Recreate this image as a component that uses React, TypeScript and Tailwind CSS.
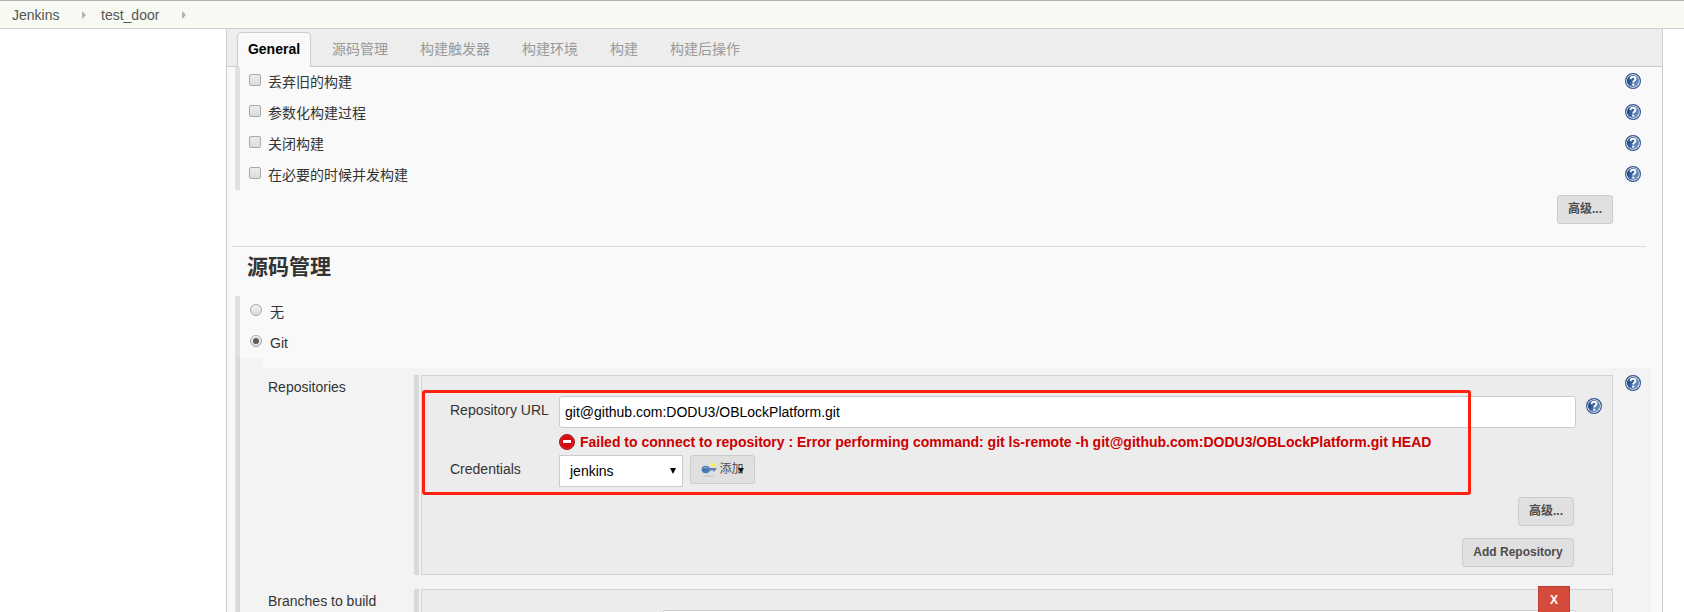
import type { ReactNode } from "react";

const tabs = ["源码管理", "构建触发器", "构建环境", "构建", "构建后操作"];
const options = ["丢弃旧的构建", "参数化构建过程", "关闭构建", "在必要的时候并发构建"];

function HelpIcon() {
  return (
    <svg width="16" height="16" viewBox="0 0 16 16" className="block shrink-0">
      <defs>
        <linearGradient id="help" x1="0" y1="0.2" x2="1" y2="0.8">
          <stop offset="0.2" stopColor="#1f4a8a" />
          <stop offset="1" stopColor="#7d9fcb" />
        </linearGradient>
      </defs>
      <circle cx="8" cy="8" r="7.4" fill="#fff" stroke="#2f5590" strokeWidth="1.2" />
      <circle cx="8" cy="8" r="6.1" fill="url(#help)" />
      <path d="M5.6 6.2C5.6 4.5 6.6 3.8 8 3.8s2.5.8 2.5 2.1c0 1.6-2.2 1.6-2.2 3.5" fill="none" stroke="#fff" strokeWidth="2" />
      <rect x="7.2" y="10.6" width="2.1" height="2" fill="#fff" />
    </svg>
  );
}

function ErrorIcon() {
  return (
    <svg width="16" height="16" viewBox="0 0 16 16" className="block shrink-0">
      <circle cx="8" cy="8" r="7.5" fill="#d40c10" stroke="#a50f12" />
      <circle cx="8" cy="8" r="6.5" fill="none" stroke="#e03a3a" strokeWidth="0.6" />
      <rect x="4" y="6" width="8" height="3" fill="#fff" />
    </svg>
  );
}

function KeyIcon() {
  return (
    <svg width="16" height="16" viewBox="0 0 16 16" className="mt-0.5 block shrink-0">
      <ellipse cx="8" cy="14.2" rx="5.5" ry="0.9" fill="#cdcdcd" />
      <circle cx="12.5" cy="3" r="2.3" fill="#f0eb7a" />
      <circle cx="12.5" cy="3" r="1.4" fill="#fff62a" />
      <path d="M6 5.9h9.2v2.2h-1.4v1.5h-1.4V8.5H6z" fill="#5a86ba" />
      <ellipse cx="4.8" cy="7.5" rx="4.2" ry="3.7" fill="#4a7ab5" />
      <path d="M1.8 6.4Q4.8 3.8 7.6 6.2" fill="none" stroke="#8fb0d8" strokeWidth="1" />
      <circle cx="2.8" cy="7.6" r="0.8" fill="#3a4f6e" />
    </svg>
  );
}

function Crumb({ children, className }: { children: ReactNode; className: string }) {
  return (
    <div className={"flex items-center " + className}>
      <span>{children}</span>
      <svg width="4" height="8" viewBox="0 0 4 8" className="mt-px ml-[23px]">
        <path d="M0 0L4 4L0 8z" fill="#b0b0b0" />
      </svg>
    </div>
  );
}

function Button({ children, className }: { children: ReactNode; className: string }) {
  return (
    <button
      className={
        "flex h-[29px] items-center justify-center rounded-[3px] border border-[#ccc] bg-[#e0e0e0] pb-0.5 text-xs leading-none text-[#4d4d4d] " +
        className
      }
    >
      {children}
    </button>
  );
}

function Radio({ label, checked }: { label: string; checked?: boolean }) {
  return (
    <div className="flex h-[31px] items-start pl-[10px]">
      <span className="mt-2 flex size-3 items-center justify-center rounded-full border border-[#a8a8a8] bg-linear-to-b from-[#f0f0f0] to-[#dcdcdc]">
        {checked && <span className="size-1.5 rounded-full bg-[#5c5c5c]" />}
      </span>
      <span className="ml-2 pt-1.5 leading-5">{label}</span>
    </div>
  );
}

export default function App() {
  return (
    <div className="relative flex h-[612px] w-[1684px] flex-col overflow-hidden bg-white font-['Liberation_Sans','Noto_Sans_CJK_SC',sans-serif] text-sm text-[#333]">
      <header className="flex h-[29px] shrink-0 items-center border-t border-b border-t-[#b5b0b3] border-b-[#d3d3cd] bg-[#f6faf2] text-[#555]">
        <Crumb className="w-[101px] pl-3">Jenkins</Crumb>
        <Crumb className="">test_door</Crumb>
      </header>

      <main className="ml-[226px] flex h-[583px] w-[1437px] flex-col border-x border-[#ccc] bg-[#f9f9f9]">
        <nav className="flex h-[38px] shrink-0 items-end border-b border-[#ccc] bg-[#ededed] pl-[10px] text-[#999]">
          <div className="-mb-px flex h-[35px] w-[74px] items-center justify-center rounded-t-[5px] border border-b-0 border-[#ccc] bg-[#f9f9f9] pb-0.5 font-bold text-black">
            General
          </div>
          <div className="flex h-[35px] items-center gap-8 pl-[21px]">
            {tabs.map((t) => (
              <span key={t}>{t}</span>
            ))}
          </div>
        </nav>

        <section className="ml-2 flex h-[123px] w-[1406px] shrink-0 flex-col border-l-[5px] border-[#e0e0e0]">
          {options.map((o) => (
            <div key={o} className="flex h-[31px] shrink-0 items-start pl-[9px]">
              <span className="mt-[7px] size-3 rounded-[2px] border border-[#a8a8a8] bg-linear-to-b from-[#ececec] to-[#dcdcdc]" />
              <span className="ml-[7px] flex-1 pt-[5px] leading-5">{o}</span>
              <span className="pt-1.5">
                <HelpIcon />
              </span>
            </div>
          ))}
        </section>

        <div className="flex shrink-0 justify-end pt-[5px] pr-[49px]">
          <Button className="w-14 font-bold">高级...</Button>
        </div>

        <h2 className="mt-[22px] ml-[5px] flex h-[50px] w-[1414px] shrink-0 items-start border-t border-[#d9d9d9] pt-1.5 pl-[15px] text-[21px] leading-7 font-bold">
          源码管理
        </h2>

        <section className="ml-2 flex h-[316px] w-[1416px] shrink-0">
          <div className="flex w-[5px] flex-col">
            <div className="h-[62px] bg-[#e0e0e0]" />
            <div className="flex flex-1">
              <div className="w-0.5 bg-[#e0e0e0]" />
              <div className="flex-1 bg-[#d9d9d9]" />
            </div>
          </div>
          <div className="flex flex-1 flex-col">
            <Radio label="无" />
            <Radio label="Git" checked />
            <div className="h-[10px] w-[23px] bg-[#f3f3f3]" />
            <div className="flex flex-1 flex-col bg-[#f3f3f3] pt-[7px]">
              <div className="flex h-[214px] shrink-0 items-start">
                <div className="w-[174px] pt-[2px] pl-[28px] leading-5">Repositories</div>
                <div className="mr-0.5 h-[200px] w-[5px] bg-[#d9d9d9]" />
                <div className="flex h-[200px] w-[1192px] flex-col border border-[#d3d3d3] bg-[#ececec]">
                  <div className="flex pt-5">
                    <div className="w-[137px] pt-1 pl-[28px] leading-5">Repository URL</div>
                    <div className="flex h-8 w-[1017px] items-center rounded-[3px] border border-[#ccc] bg-white pl-[5px] text-black">
                      git@github.com:DODU3/OBLockPlatform.git
                    </div>
                    <div className="pt-[2px] pl-[10px]">
                      <HelpIcon />
                    </div>
                  </div>
                  <div className="mt-[6px] flex h-4 items-center pl-[137px] font-bold text-[#c00]">
                    <ErrorIcon />
                    <span className="ml-1 border-l border-[#f8f8f8] leading-4">
                      Failed to connect to repository : Error performing command: git ls-remote -h git@github.com:DODU3/OBLockPlatform.git HEAD
                    </span>
                  </div>
                  <div className="flex pt-[5px]">
                    <div className="w-[137px] pt-[4px] pl-[28px] leading-5">Credentials</div>
                    <div className="flex h-8 w-[124px] items-center justify-between border border-[#ccc] bg-white pr-[6px] pl-[10px] text-black">
                      jenkins
                      <svg width="6" height="6" viewBox="0 0 6 6">
                        <path d="M0 0H6L3 6z" fill="#000" />
                      </svg>
                    </div>
                    <Button className="relative ml-[7px] w-[65px]">
                      <KeyIcon />
                      <span className="ml-0.5">添加</span>
                      <svg width="6" height="5" viewBox="0 0 6 5" className="absolute top-[12px] left-[47px]">
                        <path d="M0 0H6L3 5z" fill="#111" />
                      </svg>
                    </Button>
                  </div>
                  <div className="flex flex-col items-end gap-3 pt-[10px] pr-[38px]">
                    <Button className="w-14 font-bold">高级...</Button>
                    <Button className="w-[112px] font-bold">Add Repository</Button>
                  </div>
                </div>
                <div className="pl-3">
                  <HelpIcon />
                </div>
              </div>
              <div className="flex flex-1 items-stretch">
                <div className="w-[174px] pt-[2px] pl-[28px] leading-5">Branches to build</div>
                <div className="mr-0.5 w-[5px] bg-[#d9d9d9]" />
                <div className="flex w-[1192px] flex-col justify-end border border-b-0 border-[#d3d3d3] bg-[#ececec]">
                  <div className="ml-[241px] h-0.5 w-[913px] rounded-t-[3px] border border-b-0 border-[#ccc] bg-white" />
                </div>
              </div>
            </div>
          </div>
        </section>
      </main>

      <button className="absolute top-[586px] left-[1538px] h-[27px] w-8 border border-[#bd3d2e] bg-[#d54c3c] text-xs leading-6 font-bold text-white">
        X
      </button>
      <div className="absolute top-[390px] left-[422px] h-[105px] w-[1049px] rounded-[3px] border-3 border-[#ff2010]" />
    </div>
  );
}
